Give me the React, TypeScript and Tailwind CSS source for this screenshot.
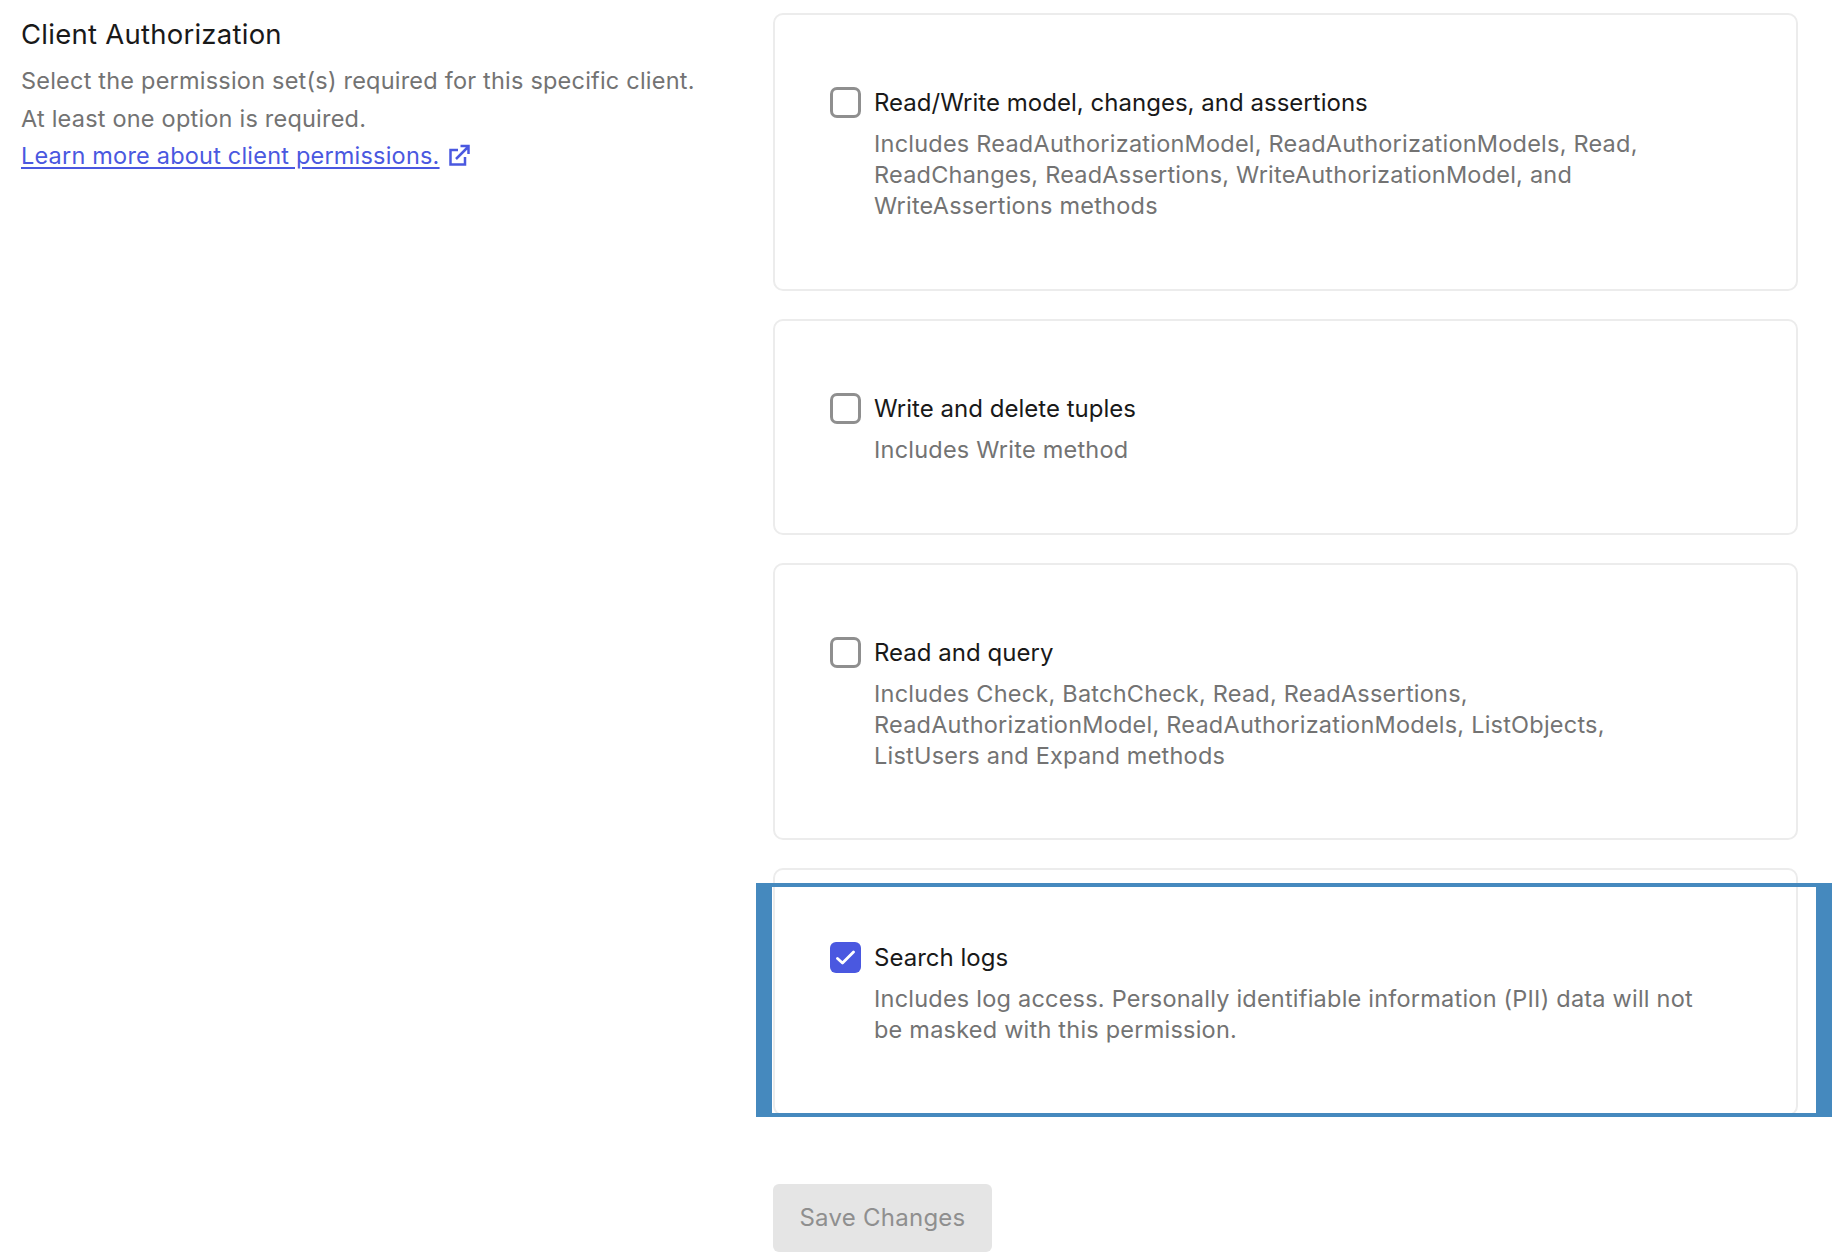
import React from "react";

const cards = [
  {
    title: "Read/Write model, changes, and assertions",
    desc: "Includes ReadAuthorizationModel, ReadAuthorizationModels, Read, ReadChanges, ReadAssertions, WriteAuthorizationModel, and WriteAssertions methods",
    checked: false,
    h: "h-[278px]",
  },
  { title: "Write and delete tuples", desc: "Includes Write method", checked: false, h: "h-[216px]" },
  {
    title: "Read and query",
    desc: "Includes Check, BatchCheck, Read, ReadAssertions, ReadAuthorizationModel, ReadAuthorizationModels, ListObjects, ListUsers and Expand methods",
    checked: false,
    h: "h-[277px]",
  },
  {
    title: "Search logs",
    desc: "Includes log access. Personally identifiable information (PII) data will not be masked with this permission.",
    checked: true,
    h: "h-[248px]",
  },
];

function Card({ title, desc, checked, h }: { title: string; desc: string; checked: boolean; h: string }) {
  return (
    <div className={`${h} rounded-[10px] border-2 border-[#ececec] bg-white pl-[55px] pt-[72px]`}>
      <div className="flex items-start gap-[13px]">
        {checked ? (
          <div className="flex h-[31px] w-[31px] shrink-0 items-center justify-center rounded-[6px] bg-[#4a58e0]">
            <svg width="19" height="15" viewBox="0 0 19 15" fill="none">
              <path d="M1.5 8.5l5 4.5L17.5 2" stroke="white" strokeWidth="2.8" strokeLinecap="round" strokeLinejoin="round" />
            </svg>
          </div>
        ) : (
          <div className="h-[31px] w-[31px] shrink-0 rounded-[7px] border-[3.5px] border-[#8f8f8f] bg-white" />
        )}
        <div className="w-[835px]">
          <div className="text-[24px] leading-[31px] font-normal tracking-[0.02px] text-[#191919]">{title}</div>
          <div className="mt-[10px] text-[23.5px] leading-[31px] tracking-[0.22px] text-[#737373]">{desc}</div>
        </div>
      </div>
    </div>
  );
}

export default function App() {
  return (
    <div className="relative flex h-[1258px] w-[1836px] overflow-hidden bg-white font-['Inter',sans-serif]">
      <div className="w-[773px] shrink-0 pl-[21px] pt-[17px]">
        <h2 className="text-[27.5px] leading-[34px] font-normal tracking-[0.25px] text-[#191919]">Client Authorization</h2>
        <p className="mt-[11px] text-[23.5px] leading-[37.5px] tracking-[0.21px] text-[#737373]">
          Select the permission set(s) required for this specific client.
          <br />
          At least one option is required.
        </p>
        <a className="flex items-center gap-[8px] text-[23.5px] leading-[37.5px] tracking-[0.2px] text-[#4a58e0]">
          <span className="underline underline-offset-[3px]">Learn more about client permissions.</span>
          <svg width="22" height="23" viewBox="0 0 22 23" fill="none" stroke="#4a58e0" strokeWidth="2.5">
            <path d="M10 6H2.5v14.5h14.5V13" strokeLinejoin="miter" />
            <path d="M8 15L20 3M12.5 2H20.5V10" />
          </svg>
        </a>
      </div>
      <div className="w-[1025px] shrink-0 pt-[13px]">
        <div className="flex flex-col gap-[28px]">
          {cards.map((c) => (
            <Card key={c.title} {...c} />
          ))}
        </div>
        <button className="mt-[68px] h-[68px] w-[219px] rounded-[6px] bg-[#e5e5e5] text-[24px] font-normal tracking-[0.25px] text-[#8f8f8f]">
          Save Changes
        </button>
      </div>
      <div className="absolute left-[756px] top-[883px] h-[234px] w-[1076px] border-x-[16px] border-y-[4px] border-[#4589be]" />
    </div>
  );
}
